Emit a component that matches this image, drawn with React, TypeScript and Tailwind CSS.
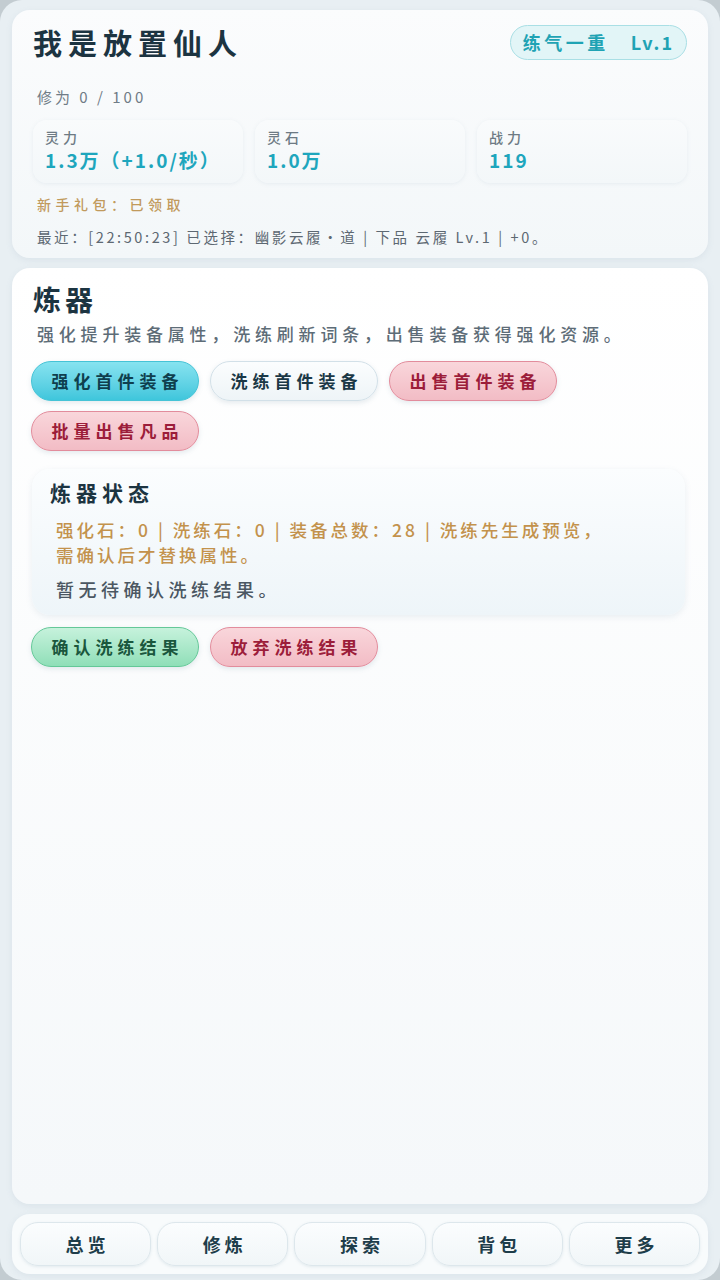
import React from 'react';

const FONT = { fontFamily: '"Noto Sans CJK SC", "Noto Sans", sans-serif' };

const Stat: React.FC<{ label: string; value: string }> = ({ label, value }) => (
  <div className="rounded-[14px] bg-gradient-to-b from-[#f9fbfc] to-[#f3f7f9] shadow-[0_1px_4px_rgba(120,150,170,0.12)] px-3 pt-[8px] pb-[11px]">
    <div className="text-[14px] font-medium leading-[18px] tracking-[4px] text-[#6d7a84]">{label}</div>
    <div className="mt-[2px] text-[19px] leading-[24px] font-bold tracking-[2px] text-[#1ea6bd]">{value}</div>
  </div>
);

type Tone = 'cyan' | 'plain' | 'pink' | 'green';

const toneClass: Record<Tone, string> = {
  cyan: 'bg-gradient-to-b from-[#86e3f0] to-[#3ec6dc] border-[#45c3d6] text-[#0f3f4e]',
  plain: 'bg-gradient-to-b from-[#fbfdfe] to-[#eef4f7] border-[#d2e0e8] text-[#1b3846]',
  pink: 'bg-gradient-to-b from-[#f9d6db] to-[#f2bcc5] border-[#e28c9c] text-[#9c1d3a]',
  green: 'bg-gradient-to-b from-[#c6f2dc] to-[#8fdfb8] border-[#64c898] text-[#1a573d]',
};

const Pill: React.FC<{ tone: Tone; children: React.ReactNode }> = ({ tone, children }) => (
  <button
    className={`h-[40px] w-[168px] rounded-full border pl-[5px] text-[17px] font-bold tracking-[5px] shadow-[0_2px_5px_rgba(90,120,140,0.15)] ${toneClass[tone]}`}
  >
    {children}
  </button>
);

const NavButton: React.FC<{ label: string }> = ({ label }) => (
  <button className="h-[44px] rounded-[18px] border border-[#dde7ec] bg-gradient-to-b from-[#fbfdfe] to-[#f1f6f8] pl-[4px] text-[18px] font-bold tracking-[4px] text-[#1e3d4a] shadow-[0_1px_3px_rgba(110,140,160,0.15)]">
    {label}
  </button>
);

export default function App() {
  return (
    <div className="h-[1280px] w-full bg-[#c3ccd1]" style={FONT}>
      <div className="flex h-full flex-col gap-[10px] rounded-[22px] bg-[#e8eff3] px-3 pt-[10px] pb-[6px]">
        {/* header card */}
        <div className="rounded-[18px] bg-gradient-to-b from-[#fbfcfd] to-[#f3f7f9] px-[21px] pt-[12px] pb-[11px] shadow-[0_2px_6px_rgba(120,150,170,0.12)]">
          <div className="flex h-[40px] items-center justify-between">
            <h1 className="text-[29px] font-bold leading-[40px] tracking-[6px] text-[#1c3441]">我是放置仙人</h1>
            <div className="flex h-[35px] items-center rounded-full border border-[#a9dfe5] bg-[#e2f5f7] px-[12px] text-[18px] font-bold text-[#1fa3b4]">
              <span className="tracking-[3.5px]">练气一重</span>
              <span className="ml-[22px] tracking-[2px]">Lv.1</span>
            </div>
          </div>
          <div className="mt-[25px] pl-[4px] text-[15px] leading-[20px] tracking-[3px] text-[#707c86]">修为 0 / 100</div>
          <div className="mt-[13px] grid grid-cols-3 gap-[12px]">
            <Stat label="灵力" value="1.3万（+1.0/秒）" />
            <Stat label="灵石" value="1.0万" />
            <Stat label="战力" value="119" />
          </div>
          <div className="mt-[11px] pl-[4px] text-[14px] font-medium leading-[20px] tracking-[4.5px] text-[#c19a5c]">新手礼包：已领取</div>
          <div className="mt-[13px] pl-[4px] text-[14.5px] leading-[20px] tracking-[2.6px] text-[#5d6872]">
            最近：[22:50:23] 已选择：幽影云履·道 | 下品 云履 Lv.1 | +0。
          </div>
        </div>

        {/* forge card */}
        <div className="flex-1 rounded-[18px] bg-gradient-to-b from-[#ffffff] to-[#f5f8fa] px-[19px] pt-[14px] shadow-[0_2px_6px_rgba(120,150,170,0.12)]">
          <h2 className="pl-[2px] text-[28px] font-bold leading-[34px] tracking-[4px] text-[#1c3441]">炼器</h2>
          <p className="mt-[6px] pl-[6px] text-[17px] font-medium leading-[24px] tracking-[4.8px] text-[#5d6c77]">
            强化提升装备属性，洗练刷新词条，出售装备获得强化资源。
          </p>
          <div className="mt-[15px] flex flex-wrap gap-x-[11px] gap-y-[10px]">
            <Pill tone="cyan">强化首件装备</Pill>
            <Pill tone="plain">洗练首件装备</Pill>
            <Pill tone="pink">出售首件装备</Pill>
            <Pill tone="pink">批量出售凡品</Pill>
          </div>

          <div className="mt-[18px] mr-[4px] ml-[1px] rounded-[18px] bg-gradient-to-b from-[#fbfdfe] to-[#eef5f9] px-[18px] pt-[9px] pb-[13px] shadow-[0_2px_6px_rgba(120,150,170,0.14)]">
            <h3 className="text-[21px] font-bold leading-[28px] tracking-[5px] text-[#1c3441]">炼器状态</h3>
            <p className="mt-[11px] pl-[6px] text-[17.5px] font-medium leading-[25px] tracking-[3px] text-[#c3924c]">
              强化石：0 | 洗练石：0 | 装备总数：28 | 洗练先生成预览，
              <br />
              需确认后才替换属性。
            </p>
            <p className="mt-[10px] pl-[6px] text-[18px] font-medium leading-[25px] tracking-[4.5px] text-[#4b5762]">暂无待确认洗练结果。</p>
          </div>

          <div className="mt-[12px] flex gap-[11px]">
            <Pill tone="green">确认洗练结果</Pill>
            <Pill tone="pink">放弃洗练结果</Pill>
          </div>
        </div>

        {/* bottom nav */}
        <div className="grid grid-cols-5 gap-[6px] rounded-[18px] bg-[#f8fbfc] px-2 py-2 shadow-[0_2px_6px_rgba(120,150,170,0.12)]">
          <NavButton label="总览" />
          <NavButton label="修炼" />
          <NavButton label="探索" />
          <NavButton label="背包" />
          <NavButton label="更多" />
        </div>
      </div>
    </div>
  );
}
